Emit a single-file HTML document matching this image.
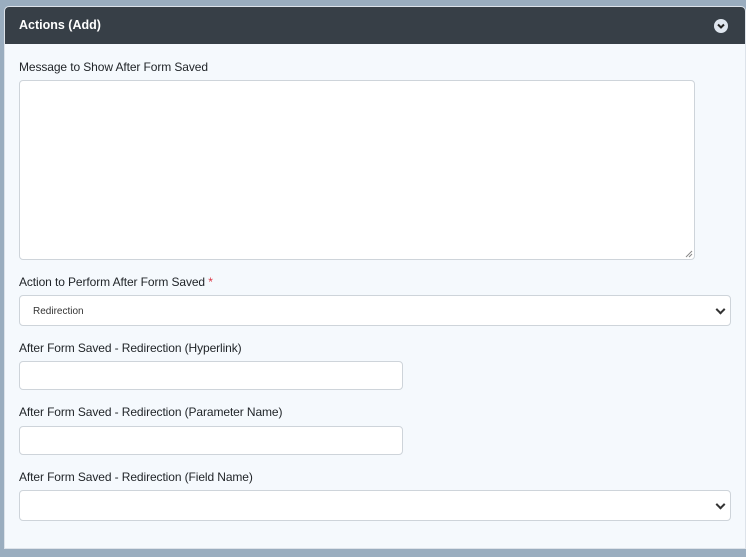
<!DOCTYPE html>
<html><head><meta charset="utf-8"><style>
*{box-sizing:border-box;margin:0;padding:0}
body{width:746px;height:557px;background:#9aadbf;font-family:"Liberation Sans",sans-serif;position:relative;overflow:hidden}
.panel{position:absolute;left:4px;top:6px;width:742px;height:543px;background:#f5f9fd;border-radius:5px 5px 0 0;overflow:hidden;border:1px solid #dde3ea}
.hdr{height:37px;background:#373f47;color:#fff;font-weight:bold;font-size:12.5px;line-height:37px;padding-left:14px}
.chev{position:absolute;right:17px;top:12px;width:14px;height:14px;border-radius:50%;background:#dfe6ef}
.lbl{position:absolute;left:19px;font-size:12px;color:#212529;letter-spacing:-0.1px}
.box{position:absolute;left:19px;background:#fff;border:1px solid #ced4da;border-radius:4px}
.sel::after{content:"";position:absolute;right:6px;top:50%;width:5px;height:5px;border-right:2px solid #333;border-bottom:2px solid #333;transform:translateY(-70%) rotate(45deg)}
.star{color:#dc3545}
</style></head><body>
<div class="panel"><div class="hdr">Actions (Add)</div>
<div class="chev"><svg width="14" height="14" viewBox="0 0 14 14"><path d="M4 5.5 L7 8.5 L10 5.5" stroke="#222" stroke-width="2" fill="none"/></svg></div>
</div>
<div class="lbl" style="top:60px">Message to Show After Form Saved</div>
<div class="box" style="top:80px;width:676px;height:180px"><svg style="position:absolute;right:1px;bottom:1px" width="8" height="8"><path d="M7 1 L1 7 M7 4 L4 7" stroke="#888" stroke-width="1"/></svg></div>
<div class="lbl" style="top:275px">Action to Perform After Form Saved <span class="star">*</span></div>
<div class="box sel" style="top:295px;width:712px;height:31px"><span style="position:absolute;left:13px;top:10px;font-size:10px;color:#333">Redirection</span></div>
<div class="lbl" style="top:341px">After Form Saved - Redirection (Hyperlink)</div>
<div class="box" style="top:361px;width:384px;height:29px"></div>
<div class="lbl" style="top:405px">After Form Saved - Redirection (Parameter Name)</div>
<div class="box" style="top:426px;width:384px;height:29px"></div>
<div class="lbl" style="top:470px">After Form Saved - Redirection (Field Name)</div>
<div class="box sel" style="top:490px;width:712px;height:31px"></div>
</body></html>
